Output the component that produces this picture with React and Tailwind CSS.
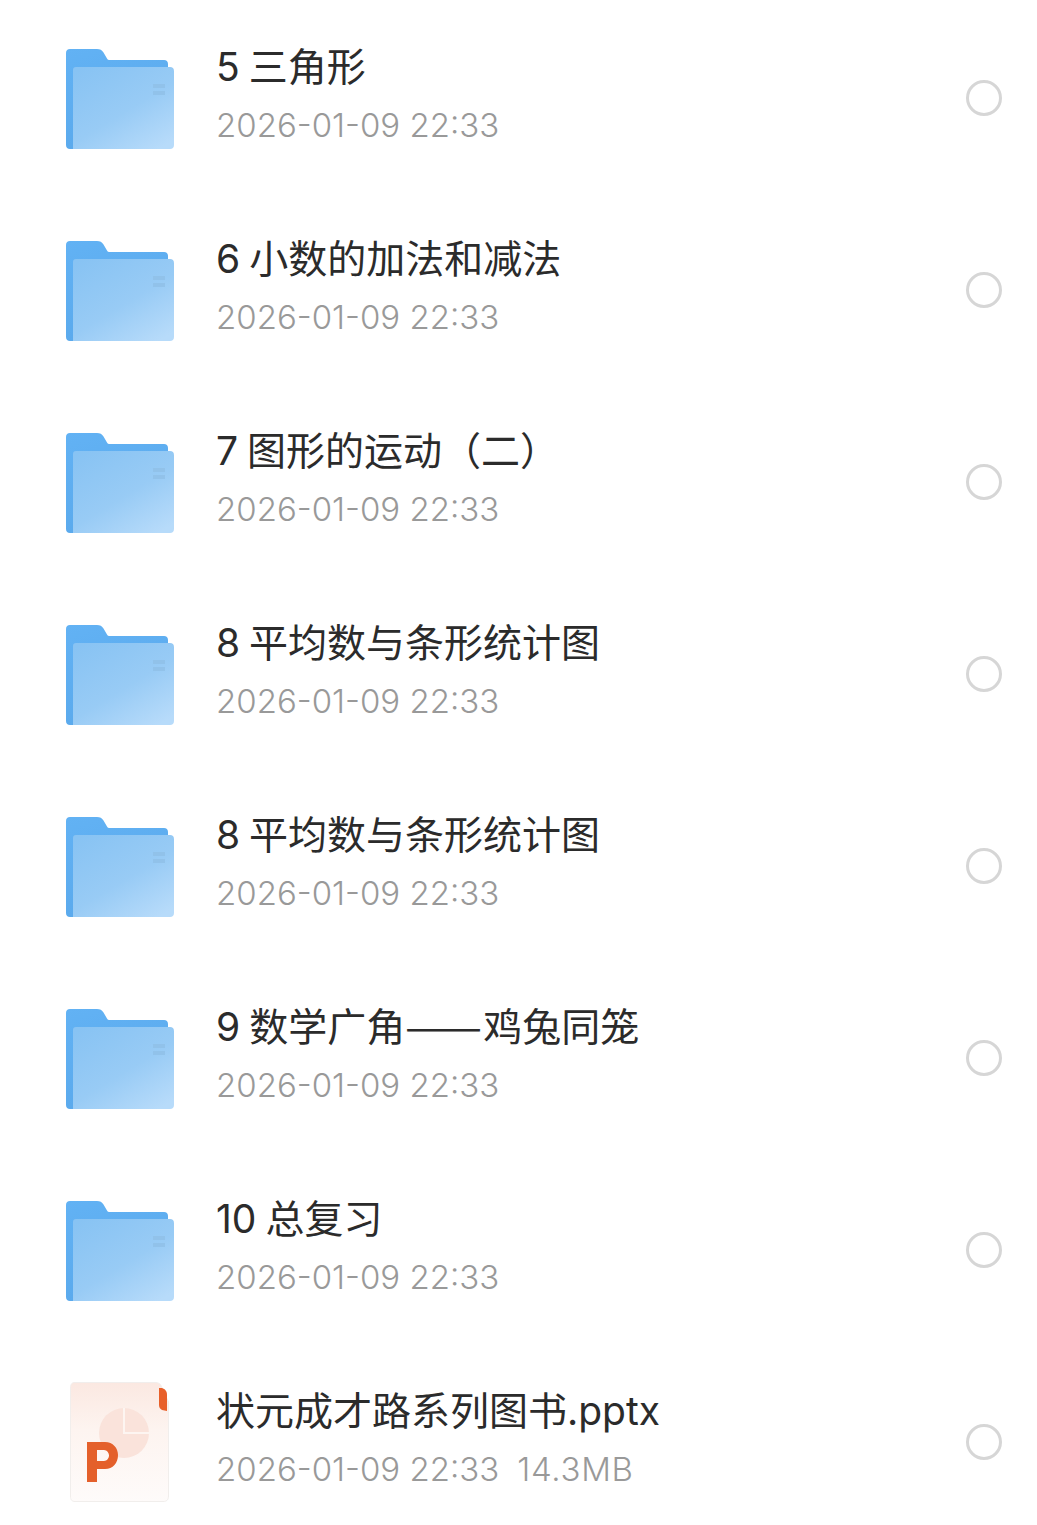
const ROWS = [
  { name: "5 三角形" },
  { name: "6 小数的加法和减法" },
  { name: "7 图形的运动（二）" },
  { name: "8 平均数与条形统计图" },
  { name: "8 平均数与条形统计图" },
  {
    name: (
      <>
        9 数学广角
        <span className="inline-block w-[78px] origin-left scale-x-[1.18] leading-none font-['Noto_Sans_CJK_SC']">——</span>
        鸡兔同笼
      </>
    ),
  },
  { name: "10 总复习" },
  { name: "状元成才路系列图书.pptx", size: "14.3MB", type: "ppt" },
];

const FolderIcon = () => (
  <svg width="108" height="100" viewBox="0 0 108 100" className="mt-[2px] block">
    <defs>
      <linearGradient id="folderBack" x1="0" y1="0" x2="0.4" y2="1">
        <stop offset="0" stopColor="#62b2f4" />
        <stop offset="1" stopColor="#5aa9ec" />
      </linearGradient>
      <linearGradient id="folderFront" x1="0.1" y1="0" x2="0.85" y2="1">
        <stop offset="0" stopColor="#88c3f3" />
        <stop offset="0.55" stopColor="#98cbf5" />
        <stop offset="1" stopColor="#b7dbfa" />
      </linearGradient>
    </defs>
    <path
      d="M4 0H31C34 0 36 1 37.500 3.500L41 9.500C41.500 10.500 42.500 11 44 11H98C100.500 11 102 12.500 102 15V60L40 100H4C1.500 100 0 98.500 0 96V4C0 1.500 1.500 0 4 0Z"
      fill="url(#folderBack)"
    />
    <path
      d="M10 18H104C106.500 18 108 19.500 108 22V96C108 98.500 106.500 100 104 100H7V21C7 19 8 18 10 18Z"
      fill="url(#folderFront)"
    />
    <rect x="87" y="35" width="12" height="4" fill="#8fbfe6" opacity="0.75" />
    <rect x="87" y="42" width="12" height="4" fill="#8fbfe6" opacity="0.75" />
  </svg>
);

const PptIcon = () => (
  <svg width="100" height="120" viewBox="0 0 100 120" className="block">
    <defs>
      <linearGradient id="pptPage" x1="0.5" y1="0" x2="0.5" y2="1">
        <stop offset="0" stopColor="#fbe8e1" />
        <stop offset="0.4" stopColor="#fdf4f0" />
        <stop offset="1" stopColor="#fefbfa" />
      </linearGradient>
    </defs>
    <path
      d="M5 0.500H85C88 0.500 90 1.500 91 3.500L98.500 20V114C98.500 118 96.500 119.500 93 119.500H5C2 119.500 0.500 118 0.500 114V6C0.500 2 2 0.500 5 0.500Z"
      fill="url(#pptPage)"
      stroke="#f1eeec"
      strokeWidth="1"
    />
    <path d="M89 6L92 6C95 7 97 9 97 13V29L92 28C90 27 89 25 89 23Z" fill="#e8602a" />
    <circle cx="54" cy="51" r="25" fill="#fae3db" />
    <path d="M54 26V51H79" fill="none" stroke="#fdf5f1" strokeWidth="2" />
    <path
      d="M17 60H35C43 60 48 66 48 73C48 81 43 87 35 87H27V100H17ZM27 68V79H34C37 79 39 76 39 73.500C39 71 37 68 34 68Z"
      fill="#e4602b"
      fillRule="evenodd"
    />
  </svg>
);

const FileRow = ({ name, size, type }) => (
  <div className="flex h-[192px] items-center pl-[66px] pr-[35px]">
    <div className="flex w-[108px] shrink-0 justify-center">
      {type === "ppt" ? <PptIcon /> : <FolderIcon />}
    </div>
    <div className="ml-[42px] mb-[4px] min-w-0 flex-1">
      <div className="text-[39px] leading-[58px] font-normal whitespace-nowrap text-[#2b2b2b] [word-spacing:-2px]">
        {name}
      </div>
      <div className="flex gap-[18px] text-[33px] leading-[58px] font-light whitespace-nowrap text-[#999999]">
        <span>2026-01-09 22:33</span>
        {size && <span className="tracking-[0.7px]">{size}</span>}
      </div>
    </div>
    <div className="h-[36px] w-[36px] shrink-0 rounded-full border-[3px] border-[#d6d6d6]" />
  </div>
);

export default function App() {
  return (
    <div
      className="h-[1525px] overflow-hidden bg-white pt-[2px]"
      style={{ fontFamily: "Inter, 'Noto Sans CJK SC', sans-serif" }}
    >
      {ROWS.map((row, i) => (
        <FileRow key={i} {...row} />
      ))}
    </div>
  );
}
